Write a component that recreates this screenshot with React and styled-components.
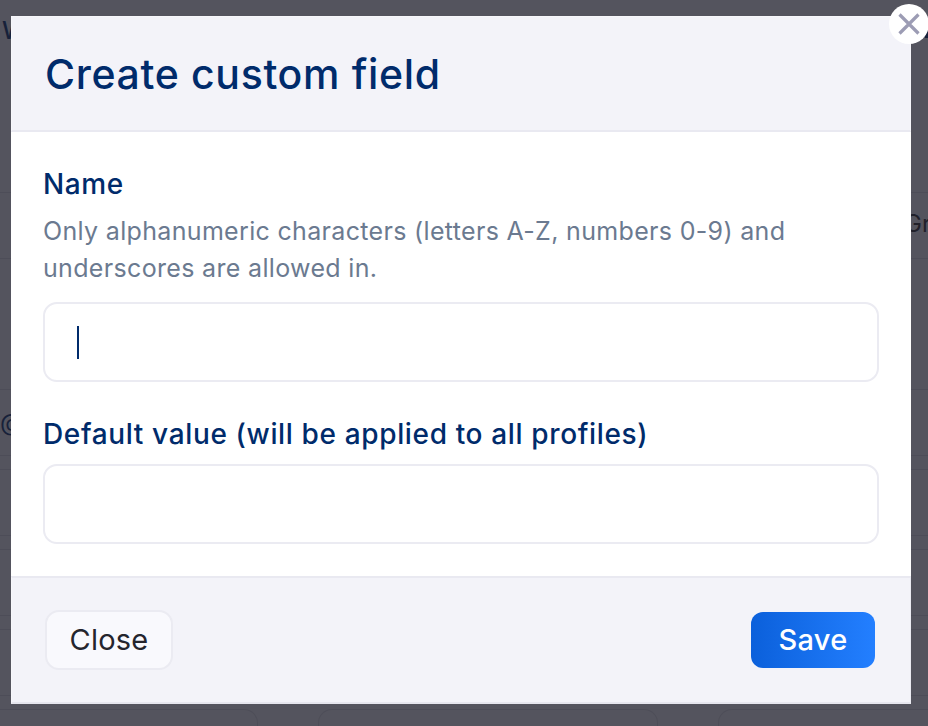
import React from 'react';
import styled, { createGlobalStyle } from 'styled-components';

const GlobalStyle = createGlobalStyle`
  html, body {
    margin: 0;
    padding: 0;
    height: 100%;
    overflow: hidden;
    background: #f3f3f9;
    font-family: Inter, "Liberation Sans", sans-serif;
  }
  * { box-sizing: border-box; }
`;

// the page sitting behind the dialog, only its edges show
const Page = styled.div`
  height: 726px;
  overflow: hidden;
  display: flex;
  flex-direction: column;
  color: #002b6b;
`;

const PageTitle = styled.div`
  height: 192px;
  flex: none;
  padding: 17px 0 0 2px;
  display: flex;
  align-items: flex-start;
  justify-content: space-between;
  font-size: 24px;
  font-weight: 500;
  line-height: 28px;
`;

const PageAction = styled.span`
  width: 3px;
  height: 8px;
  margin-top: 13px;
  background: #002b6b;
`;

const PageHead = styled.div`
  height: 67px;
  flex: none;
  margin-bottom: 130px;
  display: flex;
  align-items: center;
  justify-content: flex-end;
  padding-bottom: 5px;
  border-top: 1px solid #d8d8e2;
  border-bottom: 1px solid #d8d8e2;
  font-size: 24px;
  color: #25252d;
`;

const PageHeadText = styled.span`
  margin-right: -3px;
`;

const PageRow = styled.div`
  height: 67px;
  flex: none;
  margin-bottom: 13px;
  display: flex;
  align-items: center;
  border-top: 1px solid #d8d8e2;
  border-bottom: 1px solid #d8d8e2;
  font-size: 24px;
`;

const PageCards = styled.div`
  margin: -0.5px 0 0 -30px;
  flex: 1;
  display: grid;
  grid-template-columns: 288px 340px 340px;
  gap: 60px;
`;

const PageCard = styled.div`
  border: 1px solid #d8d8e2;
  border-bottom: 0;
  border-radius: 14px 14px 0 0;
`;

const Backdrop = styled.div`
  position: fixed;
  inset: 0;
  background: rgba(31, 31, 42, 0.75);
  display: flex;
  justify-content: flex-start;
  align-items: flex-start;
  padding: 16px 0 0 11px;
`;

const Modal = styled.div`
  position: relative;
  width: 900px;
  height: 688px;
  display: flex;
  flex-direction: column;
  background: #ffffff;
`;

const CloseCircle = styled.button`
  position: absolute;
  top: -12px;
  right: -18px;
  width: 40px;
  height: 40px;
  padding: 0;
  border: 0;
  border-radius: 50%;
  background: #ffffff;
  display: flex;
  align-items: center;
  justify-content: center;
`;

const Header = styled.div`
  height: 116px;
  flex: none;
  display: flex;
  align-items: center;
  padding: 0 33px;
  background: #f3f3f9;
  border: 1px solid #f7f7fb;
  border-bottom: 2px solid #e9e9f1;
`;

const Title = styled.h2`
  margin: 0;
  font-size: 41px;
  font-weight: 500;
  letter-spacing: 0.65px;
  color: #002b6b;
`;

const Body = styled.div`
  flex: 1;
  padding: 34px 32px 0;
`;

const Label = styled.div`
  font-size: 28px;
  line-height: 36px;
  font-weight: 500;
  letter-spacing: 0.64px;
  color: #002b6b;
`;

const Hint = styled.p`
  margin: 11px 0 15px;
  font-size: 25px;
  line-height: 37px;
  letter-spacing: 0.33px;
  color: #6b7a90;
`;

const Field = styled.div`
  height: 80px;
  margin: ${p => p.$top || 0}px 0 ${p => p.$bottom || 0}px;
  display: flex;
  align-items: center;
  padding-left: 32px;
  border: 2px solid #ebebf2;
  border-radius: 14px;
`;

const Caret = styled.span`
  width: 2px;
  height: 33px;
  background: #002b6b;
`;

const Footer = styled.div`
  height: 128px;
  flex: none;
  display: flex;
  align-items: center;
  justify-content: space-between;
  padding: 0 35px 0 33px;
  background: #f3f3f9;
  border-top: 2px solid #e9e9f1;
  border-left: 1px solid #f7f7fb;
  border-right: 1px solid #ebebf2;
  border-bottom: 2px solid #e6e6ee;
`;

const CloseButton = styled.button`
  width: 128px;
  height: 60px;
  padding: 0 0 2px;
  border: 2px solid #ebebf2;
  border-radius: 14px;
  background: #f9f9fd;
  color: #25252d;
  font: 400 29px Inter, "Liberation Sans", sans-serif;
  letter-spacing: 0.2px;
`;

const SaveButton = styled.button`
  width: 124px;
  height: 56px;
  padding: 0 0 2px;
  border: 0;
  border-radius: 12px;
  background: linear-gradient(90deg, #0b60db, #237fff);
  color: #ffffff;
  font: 500 29px Inter, "Liberation Sans", sans-serif;
  letter-spacing: 0.3px;
`;

export default function App() {
  return (
    <>
      <GlobalStyle />
      <Page>
        <PageTitle>
          W
          <PageAction />
        </PageTitle>
        <PageHead>
          <PageHeadText>Gr</PageHeadText>
        </PageHead>
        <PageRow>@</PageRow>
        <PageRow />
        <PageRow />
        <PageRow />
        <PageCards>
          <PageCard />
          <PageCard />
          <PageCard />
        </PageCards>
      </Page>
      <Backdrop>
        <Modal>
          <CloseCircle aria-label="Close">
            <svg width="24" height="24" viewBox="0 0 24 24" fill="none" stroke="#9c9cb4" strokeWidth="3.2">
              <path d="M2.5 2.5l19 19M21.5 2.5l-19 19" />
            </svg>
          </CloseCircle>
          <Header>
            <Title>Create custom field</Title>
          </Header>
          <Body>
            <Label>Name</Label>
            <Hint>Only alphanumeric characters (letters A-Z, numbers 0-9) and underscores are allowed in.</Hint>
            <Field $bottom={34}>
              <Caret />
            </Field>
            <Label>Default value (will be applied to all profiles)</Label>
            <Field $top={12} />
          </Body>
          <Footer>
            <CloseButton>Close</CloseButton>
            <SaveButton>Save</SaveButton>
          </Footer>
        </Modal>
      </Backdrop>
    </>
  );
}
